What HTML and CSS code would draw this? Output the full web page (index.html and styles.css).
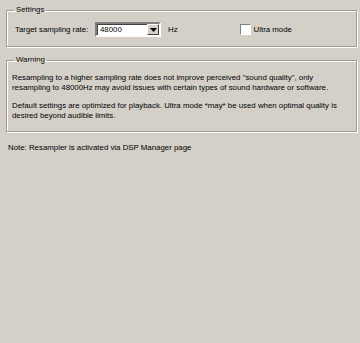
FILE: index.html
```html
<!DOCTYPE html>
<html lang="en">
<head>
  <meta charset="UTF-8">
  <title>Resampler</title>
  <link rel="stylesheet" href="styles.css">
</head>
<body>
  <div class="page">
    <fieldset class="group settings">
      <legend>Settings</legend>
      <div class="row">
        <span class="label">Target sampling rate:</span>
        <div class="combo">
          <span class="combo-value">48000</span>
          <span class="combo-btn">
            <svg width="7" height="4" viewBox="0 0 7 4"><path d="M0 0h7L3.5 4z" fill="#000"/></svg>
          </span>
        </div>
        <span class="unit">Hz</span>
        <label class="check">
          <span class="box"></span>
          <span>Ultra mode</span>
        </label>
      </div>
    </fieldset>

    <fieldset class="group warning">
      <legend>Warning</legend>
      <p>Resampling to a higher sampling rate does not improve perceived "sound quality", only resampling to 48000Hz may avoid issues with certain types of sound hardware or software.</p>
      <p>Default settings are optimized for playback. Ultra mode *may* be used when optimal quality is desired beyond audible limits.</p>
    </fieldset>

    <p class="note">Note: Resampler is activated via DSP Manager page</p>
  </div>
</body>
</html>
```

FILE: styles.css
```css
body {
  margin: 0;
  background: #d4d0c8;
  font-family: 'Liberation Sans', Arial, sans-serif;
  font-size: 7.85px;
  color: #000;
  height: 343px;
}
.page {
  padding: 5px 3px 0 6px;
}
.group {
  margin: 0;
  padding: 0 5px;
  border: 1px solid #a09c94;
  box-shadow: inset 1px 1px #fff, 1px 1px #fff;
}
.group legend {
  padding: 0 2px;
  margin-left: 2px;
  line-height: 10px;
}
.settings {
  height: 40px;
}
.row {
  display: flex;
  align-items: center;
  margin-top: 7px;
  padding-left: 3px;
}
.label {
  width: 80px;
}
.combo {
  display: flex;
  align-items: center;
  width: 62px;
  height: 11px;
  background: #fff;
  border: 2px solid;
  border-color: #808080 #fff #fff #808080;
  box-shadow: inset 1px 1px #404040;
}
.combo-value {
  flex: 1;
  padding-left: 3px;
}
.combo-btn {
  display: flex;
  align-items: center;
  justify-content: center;
  width: 12px;
  height: 11px;
  background: #d4d0c8;
  box-sizing: border-box;
  border: 1px solid;
  border-color: #fff #404040 #404040 #fff;
}
.unit {
  margin-left: 7px;
}
.check {
  display: flex;
  align-items: center;
  margin-left: 62px;
}
.box {
  width: 9px;
  height: 9px;
  background: #fff;
  border: 1px solid;
  border-color: #808080 #fff #fff #808080;
  margin-right: 3px;
}
.warning {
  margin-top: 8px;
  padding-bottom: 10px;
}
.warning p {
  margin: 8px 0 0;
  line-height: 10px;
}
.note {
  margin: 11px 0 0 2px;
}
```
